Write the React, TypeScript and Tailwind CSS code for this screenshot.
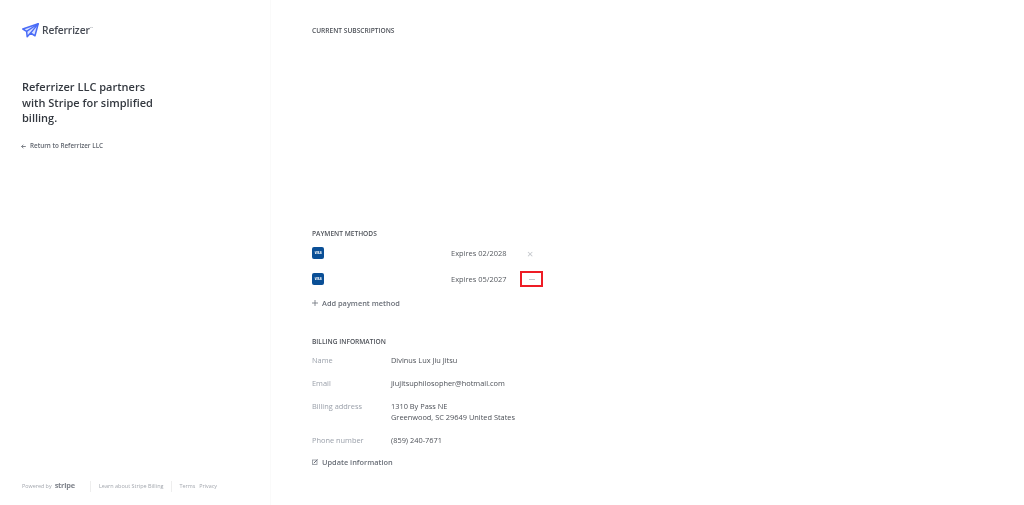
const font = { fontFamily: '"Open Sans", "Noto Sans", sans-serif' };

function Visa() {
  return (
    <div className="flex h-[12px] w-[12px] shrink-0 items-center justify-center rounded-[2px] bg-[#0a4f96]">
      <span className="text-[3.5px] font-bold italic leading-none text-white">VISA</span>
    </div>
  );
}

function Logo() {
  return (
    <svg width="17" height="15" viewBox="0 0 17 15" fill="none">
      <path d="M0.8 6 16.2 0.8 13 12.8 8.6 10 5.2 13.8 4.6 8.4Z" fill="#dbe2ff" stroke="#4a6cf7" strokeWidth="1.5" strokeLinejoin="round" />
      <path d="M4.6 8.4 16.2 0.8 8.6 10" stroke="#4a6cf7" strokeWidth="1.3" strokeLinejoin="round" />
    </svg>
  );
}

function Info({ label, children, className }: { label: string; children: React.ReactNode; className?: string }) {
  return (
    <div className={"flex text-[7.4px] leading-[11px] " + (className ?? "")}>
      <div className="w-[79px] shrink-0 text-[#9aa0aa]">{label}</div>
      <div className="text-[#4d5158]">{children}</div>
    </div>
  );
}

function Payment({ expiry, children, className }: { expiry: string; children: React.ReactNode; className?: string }) {
  return (
    <div className={"flex h-[12px] w-[231px] items-center " + (className ?? "")}>
      <Visa />
      <div className="ml-[127px] w-[69px] shrink-0 whitespace-nowrap pt-[1px] text-[7.45px] text-[#55595f]">{expiry}</div>
      {children}
    </div>
  );
}

export default function App() {
  return (
    <div style={font} className="flex h-[505px] w-[1024px] overflow-hidden bg-white blur-[0.6px]">
      <aside className="flex h-full w-[271px] shrink-0 flex-col border-r border-[#fafafa] pl-[22px] pt-[23px] pb-[13px]">
        <div className="flex h-[15px] items-center">
          <Logo />
          <span className="ml-[3px] text-[10.2px] font-semibold leading-none tracking-[-0.1px] text-[#454a53]">Referrizer</span>
          <span className="mb-[6px] text-[2.5px] leading-none text-[#8a8f98]">TM</span>
        </div>
        <h1 className="mt-[41px] w-[135px] text-[11px] font-semibold leading-[15.7px] text-[#33383f]">
          Referrizer LLC partners with Stripe for simplified billing.
        </h1>
        <div className="mt-[15px] -ml-[1px] flex items-center text-[6.3px] font-semibold leading-[10px] text-[#5f646d]">
          <svg className="mr-[3px]" width="5" height="5" viewBox="0 0 5 5" fill="none">
            <path d="M4.8 2.5H0.6M2.4 0.7 0.6 2.5 2.4 4.3" stroke="#5f646d" strokeWidth="0.8" />
          </svg>
          <span className="ml-[1px]">Return to Referrizer LLC</span>
        </div>
        <div className="mt-auto flex h-[12px] items-center whitespace-nowrap text-[5.4px] text-[#a3a7ae]">
          <span>Powered by</span>
          <span className="ml-[3px] text-[7.4px] font-bold tracking-[-0.2px] text-[#7f838b]">stripe</span>
          <span className="ml-[15px] h-[11px] border-l border-[#eeeeee]" />
          <span className="ml-[8px] text-[5.5px]">Learn about Stripe Billing</span>
          <span className="ml-[7px] h-[11px] border-l border-[#eeeeee]" />
          <span className="ml-[8px]">Terms</span>
          <span className="ml-[4px]">Privacy</span>
        </div>
      </aside>
      <main className="flex-1 pl-[41px] pt-[26px]">
        <h2 className="pt-[0.5px] text-[6.6px] font-semibold leading-[8px] text-[#4d5158]">CURRENT SUBSCRIPTIONS</h2>
        <h2 className="mt-[195.5px] text-[6.6px] font-semibold leading-[8px] text-[#4d5158]">PAYMENT METHODS</h2>
        <Payment expiry="Expires 02/2028" className="mt-[9px]">
          <span className="ml-[7px] text-[11px] leading-none text-[#c4c7cc]">×</span>
        </Payment>
        <Payment expiry="Expires 05/2027" className="mt-[14px]">
          <div className="flex h-[16px] w-[23px] shrink-0 items-center justify-center border-2 border-[#ee1c25]">
            <span className="h-px w-[6px] bg-[#c4c7cc]" />
          </div>
        </Payment>
        <div className="mt-[12px] flex items-center text-[7.4px] font-semibold leading-[12px] text-[#6a6f78]">
          <svg className="mr-[4px]" width="6" height="6" viewBox="0 0 6 6" fill="none">
            <path d="M3 0V6M0 3H6" stroke="#6a6f78" strokeWidth="0.8" />
          </svg>
          Add payment method
        </div>
        <h2 className="mt-[29px] text-[6.6px] font-semibold leading-[8px] text-[#4d5158]">BILLING INFORMATION</h2>
        <Info label="Name" className="mt-[9px]">Divinus Lux Jiu Jitsu</Info>
        <Info label="Email" className="mt-[12px]">jiujitsuphilosopher@hotmail.com</Info>
        <Info label="Billing address" className="mt-[12px]">
          1310 By Pass NE
          <br />
          Greenwood, SC 29649 United States
        </Info>
        <Info label="Phone number" className="mt-[12px]">(859) 240-7671</Info>
        <div className="mt-[10px] flex items-center text-[7.4px] font-semibold leading-[12px] text-[#6a6f78]">
          <svg className="mr-[4px]" width="6" height="6" viewBox="0 0 6 6" fill="none">
            <rect x="0.5" y="1" width="4.5" height="4.5" stroke="#8a8f98" strokeWidth="0.8" />
            <path d="M1.8 4.2 5.5 0.5" stroke="#6a6f78" strokeWidth="1" />
          </svg>
          Update information
        </div>
      </main>
    </div>
  );
}
